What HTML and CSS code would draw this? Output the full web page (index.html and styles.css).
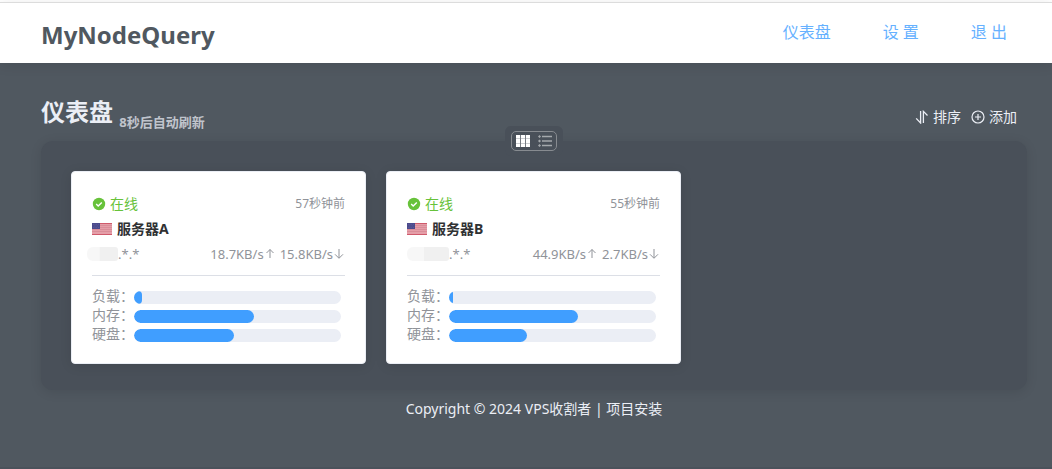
FILE: index.html
```html
<!DOCTYPE html>
<html lang="zh-CN">
<head>
<meta charset="utf-8">
<title>MyNodeQuery</title>
<link rel="stylesheet" href="styles.css">
</head>
<body>
<svg class="sprite" aria-hidden="true">
  <symbol id="check" viewBox="0 0 14 14"><circle cx="7" cy="7" r="6.2" fill="#67c23a"/><path d="M4.2 7.1l2 2 3.6-3.7" fill="none" stroke="#fff" stroke-width="1.4"/></symbol>
  <symbol id="flag" viewBox="0 0 20 12"><path fill="#e59ea8" d="M0 0h20v12H0z"/><path d="M0 2.5h20M0 4.5h20M0 6.5h20M0 8.5h20" stroke="#d98d98"/><path d="M0 .5h20M0 11.5h20" stroke="#cf5a6b"/><path fill="#4b4a8c" d="M0 0h8v6H0z"/><path d="M1 1.5h6M2 3h5M1 4.5h6" stroke="#6b69a3" stroke-width=".6" stroke-dasharray=".7 1"/></symbol>
  <symbol id="up" viewBox="0 0 12 12"><path d="M6 10V1.500M2.500 5L6 1.500 9.500 5" fill="none" stroke="currentColor"/></symbol>
  <symbol id="down" viewBox="0 0 12 12"><path d="M6 1v9M2 6.300l4 4 4-4" fill="none" stroke="currentColor"/></symbol>
</svg>
<div class="page">
  <header class="header">
    <h1 class="brand">MyNodeQuery</h1>
    <nav class="nav">
      <a class="nav-link" href="#">仪表盘</a>
      <a class="nav-link" href="#">设 置</a>
      <a class="nav-link" href="#">退 出</a>
    </nav>
  </header>
  <main class="main">
    <div class="title-row">
      <h2 class="title">仪表盘 <small class="refresh">8秒后自动刷新</small></h2>
      <div class="actions">
        <button class="action" type="button"><svg class="icon" viewBox="0 0 14 14"><path d="M5.6 1v12L1.200 8.400M8.400 13V1.400L12.500 5.500" fill="none" stroke="currentColor" stroke-width="1.3"/></svg>排序</button>
        <button class="action" type="button"><svg class="icon" viewBox="0 0 14 14"><path d="M7 4v6M4 7h6" stroke="currentColor" stroke-width="1.2"/><circle cx="7" cy="7" r="6" fill="none" stroke="currentColor" stroke-width="1.2"/></svg>添加</button>
      </div>
    </div>
    <section class="panel">
      <div class="switch">
        <div class="switch-box">
          <button class="view" type="button" aria-label="网格"><svg class="view-icon" viewBox="0 0 14 12"><path fill="#ccced1" d="M0 0h14v12H0z"/><path fill="#fff" d="M0 0h4v3H0zM5 0h4v3H5zM10 0h4v3h-4zM0 4h4v4H0zM5 4h4v4H5zM10 4h4v4h-4zM0 9h4v3H0zM5 9h4v3H5zM10 9h4v3h-4z"/><path d="M4.500 0v12M9.500 0v12" stroke="#777c83"/></svg></button>
          <button class="view" type="button" aria-label="列表"><svg class="view-icon" viewBox="0 0 14 12"><path d="M4 1.500h10M4 6h10M4 10.500h10" stroke="#a4a8ac" stroke-width="1.500"/><path fill="#a4a8ac" d="M0 1.500L1.500 0 3 1.500 1.500 3zM0 6l1.500-1.500L3 6 1.500 7.500zM0 10.500L1.500 9 3 10.500 1.500 12z"/></svg></button>
        </div>
      </div>
      <article class="card">
        <div class="row status"><span class="online"><svg class="icon" viewBox="0 0 14 14"><use href="#check"/></svg>在线</span><time class="ago">57秒钟前</time></div>
        <h3 class="row name"><svg class="flag"><use href="#flag"/></svg>服务器A</h3>
        <div class="row net"><span class="ip"><span class="mask mask-a"></span>.*.*</span><span class="speed"><span>18.7KB/s<svg class="arrow"><use href="#up"/></svg></span><span>15.8KB/s<svg class="arrow"><use href="#down"/></svg></span></span></div>
        <div class="meters">
          <div class="meter"><span class="label">负载：</span><div class="track"><div class="fill" style="width:4%"></div></div></div>
          <div class="meter"><span class="label">内存：</span><div class="track"><div class="fill" style="width:58%"></div></div></div>
          <div class="meter"><span class="label">硬盘：</span><div class="track"><div class="fill" style="width:48.400%"></div></div></div>
        </div>
      </article>
      <article class="card">
        <div class="row status"><span class="online"><svg class="icon" viewBox="0 0 14 14"><use href="#check"/></svg>在线</span><time class="ago">55秒钟前</time></div>
        <h3 class="row name"><svg class="flag"><use href="#flag"/></svg>服务器B</h3>
        <div class="row net"><span class="ip"><span class="mask mask-b"></span>.*.*</span><span class="speed"><span>44.9KB/s<svg class="arrow"><use href="#up"/></svg></span><span>2.7KB/s<svg class="arrow"><use href="#down"/></svg></span></span></div>
        <div class="meters">
          <div class="meter"><span class="label">负载：</span><div class="track"><div class="fill" style="width:2%"></div></div></div>
          <div class="meter"><span class="label">内存：</span><div class="track"><div class="fill" style="width:62.500%"></div></div></div>
          <div class="meter"><span class="label">硬盘：</span><div class="track"><div class="fill" style="width:37.700%"></div></div></div>
        </div>
      </article>
    </section>
  </main>
  <footer class="footer">Copyright © 2024 <a class="foot-link" href="#">VPS收割者</a> | <a class="foot-link" href="#">项目安装</a></footer>
</div>
</body>
</html>
```
FILE: styles.css
```css
* { box-sizing: border-box; }
body {
  margin: 0;
  background: #505860;
  color: #909399;
  font: 14px/20px "Noto Sans", "Noto Sans CJK SC", sans-serif;
}
h1, h2, h3 { margin: 0; }
a { color: inherit; text-decoration: none; }
button {
  padding: 0;
  border: 0;
  background: none;
  color: inherit;
  font: inherit;
  cursor: pointer;
}
svg { display: block; flex: none; }
.sprite { position: absolute; width: 0; height: 0; }
.page {
  display: flex;
  flex-direction: column;
  min-height: 100vh;
  border-top: 2px solid #fff;
  border-bottom: 2px solid #4b525b;
}
.header {
  display: flex;
  justify-content: space-between;
  align-items: center;
  height: 61px;
  padding: 0 45px 0 41px;
  border-top: 1px solid #dcdcdc;
  background: #fff;
  box-shadow: 0 2px 12px rgba(0, 0, 0, .1);
}
.brand {
  padding-top: 4px;
  color: #505860;
  font-size: 24px;
  line-height: 32px;
}
.nav {
  display: flex;
  gap: 52px;
  padding-bottom: 2px;
  color: #66b1ff;
  font-size: 16px;
  line-height: 24px;
}
.main { padding: 28px 25px 0 41px; }
.title-row {
  display: flex;
  justify-content: space-between;
  align-items: center;
  height: 50px;
}
.title {
  padding-bottom: 8px;
  color: #ebeef5;
  font-size: 24px;
  line-height: 40px;
}
.refresh {
  color: #c0c4cc;
  font-size: 13px;
  vertical-align: sub;
  line-height: 16px;
}
.actions {
  display: flex;
  gap: 10px;
  padding: 2px 10px 0 0;
  color: #ebeef5;
}
.action, .online { display: flex; align-items: center; gap: 4px; }
.icon { width: 14px; height: 14px; }
.panel {
  position: relative;
  display: flex;
  flex-wrap: wrap;
  gap: 20px;
  padding: 30px 30px 26px;
  border-radius: 12px;
  background: #495059;
  box-shadow: 0 2px 12px rgba(0, 0, 0, .1);
}
.switch {
  position: absolute;
  top: -15px;
  left: 50%;
  width: 58px;
  padding: 5px 6px;
  border-radius: 6px;
  background: #495059;
  transform: translateX(-50%);
}
.switch-box {
  display: flex;
  justify-content: space-between;
  align-items: center;
  height: 20px;
  padding: 0 4px;
  border: 1px solid #878b90;
  border-radius: 5px;
}
.view-icon { width: 14px; height: 12px; }
.card {
  width: 295px;
  padding: 19px 20px;
  border: 1px solid #ebeef5;
  border-radius: 4px;
  background: #fff;
  box-shadow: 0 2px 12px rgba(0, 0, 0, .1);
}
.row {
  display: flex;
  justify-content: space-between;
  align-items: center;
  height: 25px;
}
.online { color: #67c23a; }
.ago { font-size: 12px; }
.name {
  justify-content: flex-start;
  gap: 5px;
  color: #303133;
  font-size: 14px;
}
.flag { width: 20px; height: 12px; }
.net { font-size: 13px; }
.ip, .speed, .speed span { display: flex; align-items: center; }
.speed { gap: 4px; }
.arrow { width: 12px; height: 12px; }
.mask {
  height: 14px;
  border-radius: 6px 3px 3px 6px;
  background: linear-gradient(90deg, #f7f7f7 40%, #f0f0f0 41%);
}
.mask-a { width: 31px; margin-left: -5px; }
.mask-b { width: 42px; }
.meters {
  margin-top: 9px;
  padding-top: 11px;
  border-top: 1px solid #dcdfe6;
}
.meter {
  display: flex;
  align-items: center;
  height: 19px;
}
.label { width: 42px; padding-bottom: 1px; white-space: nowrap; }
.track {
  flex: 1;
  height: 13px;
  margin: 2px 4px 0 0;
  border-radius: 7px;
  background: #ebeef5;
  overflow: hidden;
}
.fill {
  height: 100%;
  border-radius: 7px;
  background: #409eff;
}
.footer {
  padding: 9px 0 0 16px;
  color: #ebeef5;
  text-align: center;
}
```
